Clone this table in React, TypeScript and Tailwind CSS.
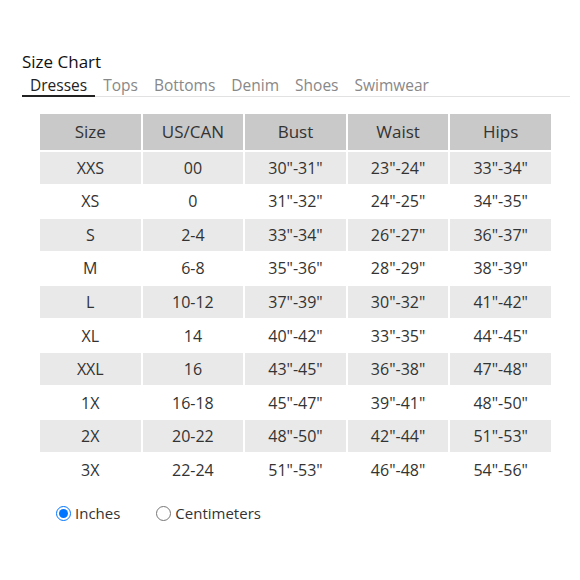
import { useState } from 'react';

const tabs = ['Dresses', 'Tops', 'Bottoms', 'Denim', 'Shoes', 'Swimwear'];

const headers = ['Size', 'US/CAN', 'Bust', 'Waist', 'Hips'];

const rows = [
  ['XXS', '00', '30"-31"', '23"-24"', '33"-34"'],
  ['XS', '0', '31"-32"', '24"-25"', '34"-35"'],
  ['S', '2-4', '33"-34"', '26"-27"', '36"-37"'],
  ['M', '6-8', '35"-36"', '28"-29"', '38"-39"'],
  ['L', '10-12', '37"-39"', '30"-32"', '41"-42"'],
  ['XL', '14', '40"-42"', '33"-35"', '44"-45"'],
  ['XXL', '16', '43"-45"', '36"-38"', '47"-48"'],
  ['1X', '16-18', '45"-47"', '39"-41"', '48"-50"'],
  ['2X', '20-22', '48"-50"', '42"-44"', '51"-53"'],
  ['3X', '22-24', '51"-53"', '46"-48"', '54"-56"'],
];

export default function App() {
  const [tab, setTab] = useState('Dresses');
  const [unit, setUnit] = useState('in');

  return (
    <div className="w-[580px] h-[580px] bg-white pt-[51px] pl-[22px] text-[#333] font-['Open_Sans',sans-serif]">
      <h2 className="text-[17px] leading-[22px] font-medium text-[#111]">Size Chart</h2>

      {/* Category tabs */}
      <div className="flex w-[548px] border-b border-[#e2e2e2] mt-[1px]">
        {tabs.map((t) => (
          <button
            key={t}
            onClick={() => setTab(t)}
            className={
              'px-2 pt-[1px] text-[15.5px] font-medium leading-[20px] -mb-px border-b-2 ' +
              (tab === t ? 'border-[#222] text-[#222]' : 'border-transparent text-[#888]')
            }
          >
            {t}
          </button>
        ))}
      </div>

      {/* Table */}
      <div className="ml-[18px] mt-[17px] w-[511px] grid grid-cols-5 gap-x-[2px] gap-y-[1.6px]">
        {headers.map((h) => (
          <div key={h} className="h-[36px] bg-[#c9c9c9] flex items-center justify-center text-[17px] text-[#333]">
            {h}
          </div>
        ))}
        {rows.map((r, i) =>
          r.map((c, j) => (
            <div
              key={i + '-' + j}
              className={
                'h-[32px] flex items-center justify-center text-[16px] text-[#333] ' +
                (i % 2 === 0 ? 'bg-[#e9e9e9]' : 'bg-white')
              }
            >
              {c}
            </div>
          ))
        )}
      </div>

      {/* Units */}
      <div className="flex items-center ml-[34px] mt-[16px] text-[15px] text-[#333]">
        <label className="flex items-center gap-[4px] mr-[36px]">
          <input
            type="radio"
            name="unit"
            checked={unit === 'in'}
            onChange={() => setUnit('in')}
            className="w-[15px] h-[15px] m-0"
          />
          Inches
        </label>
        <label className="flex items-center gap-[4px]">
          <input
            type="radio"
            name="unit"
            checked={unit === 'cm'}
            onChange={() => setUnit('cm')}
            className="w-[15px] h-[15px] m-0"
          />
          Centimeters
        </label>
      </div>
    </div>
  );
}
